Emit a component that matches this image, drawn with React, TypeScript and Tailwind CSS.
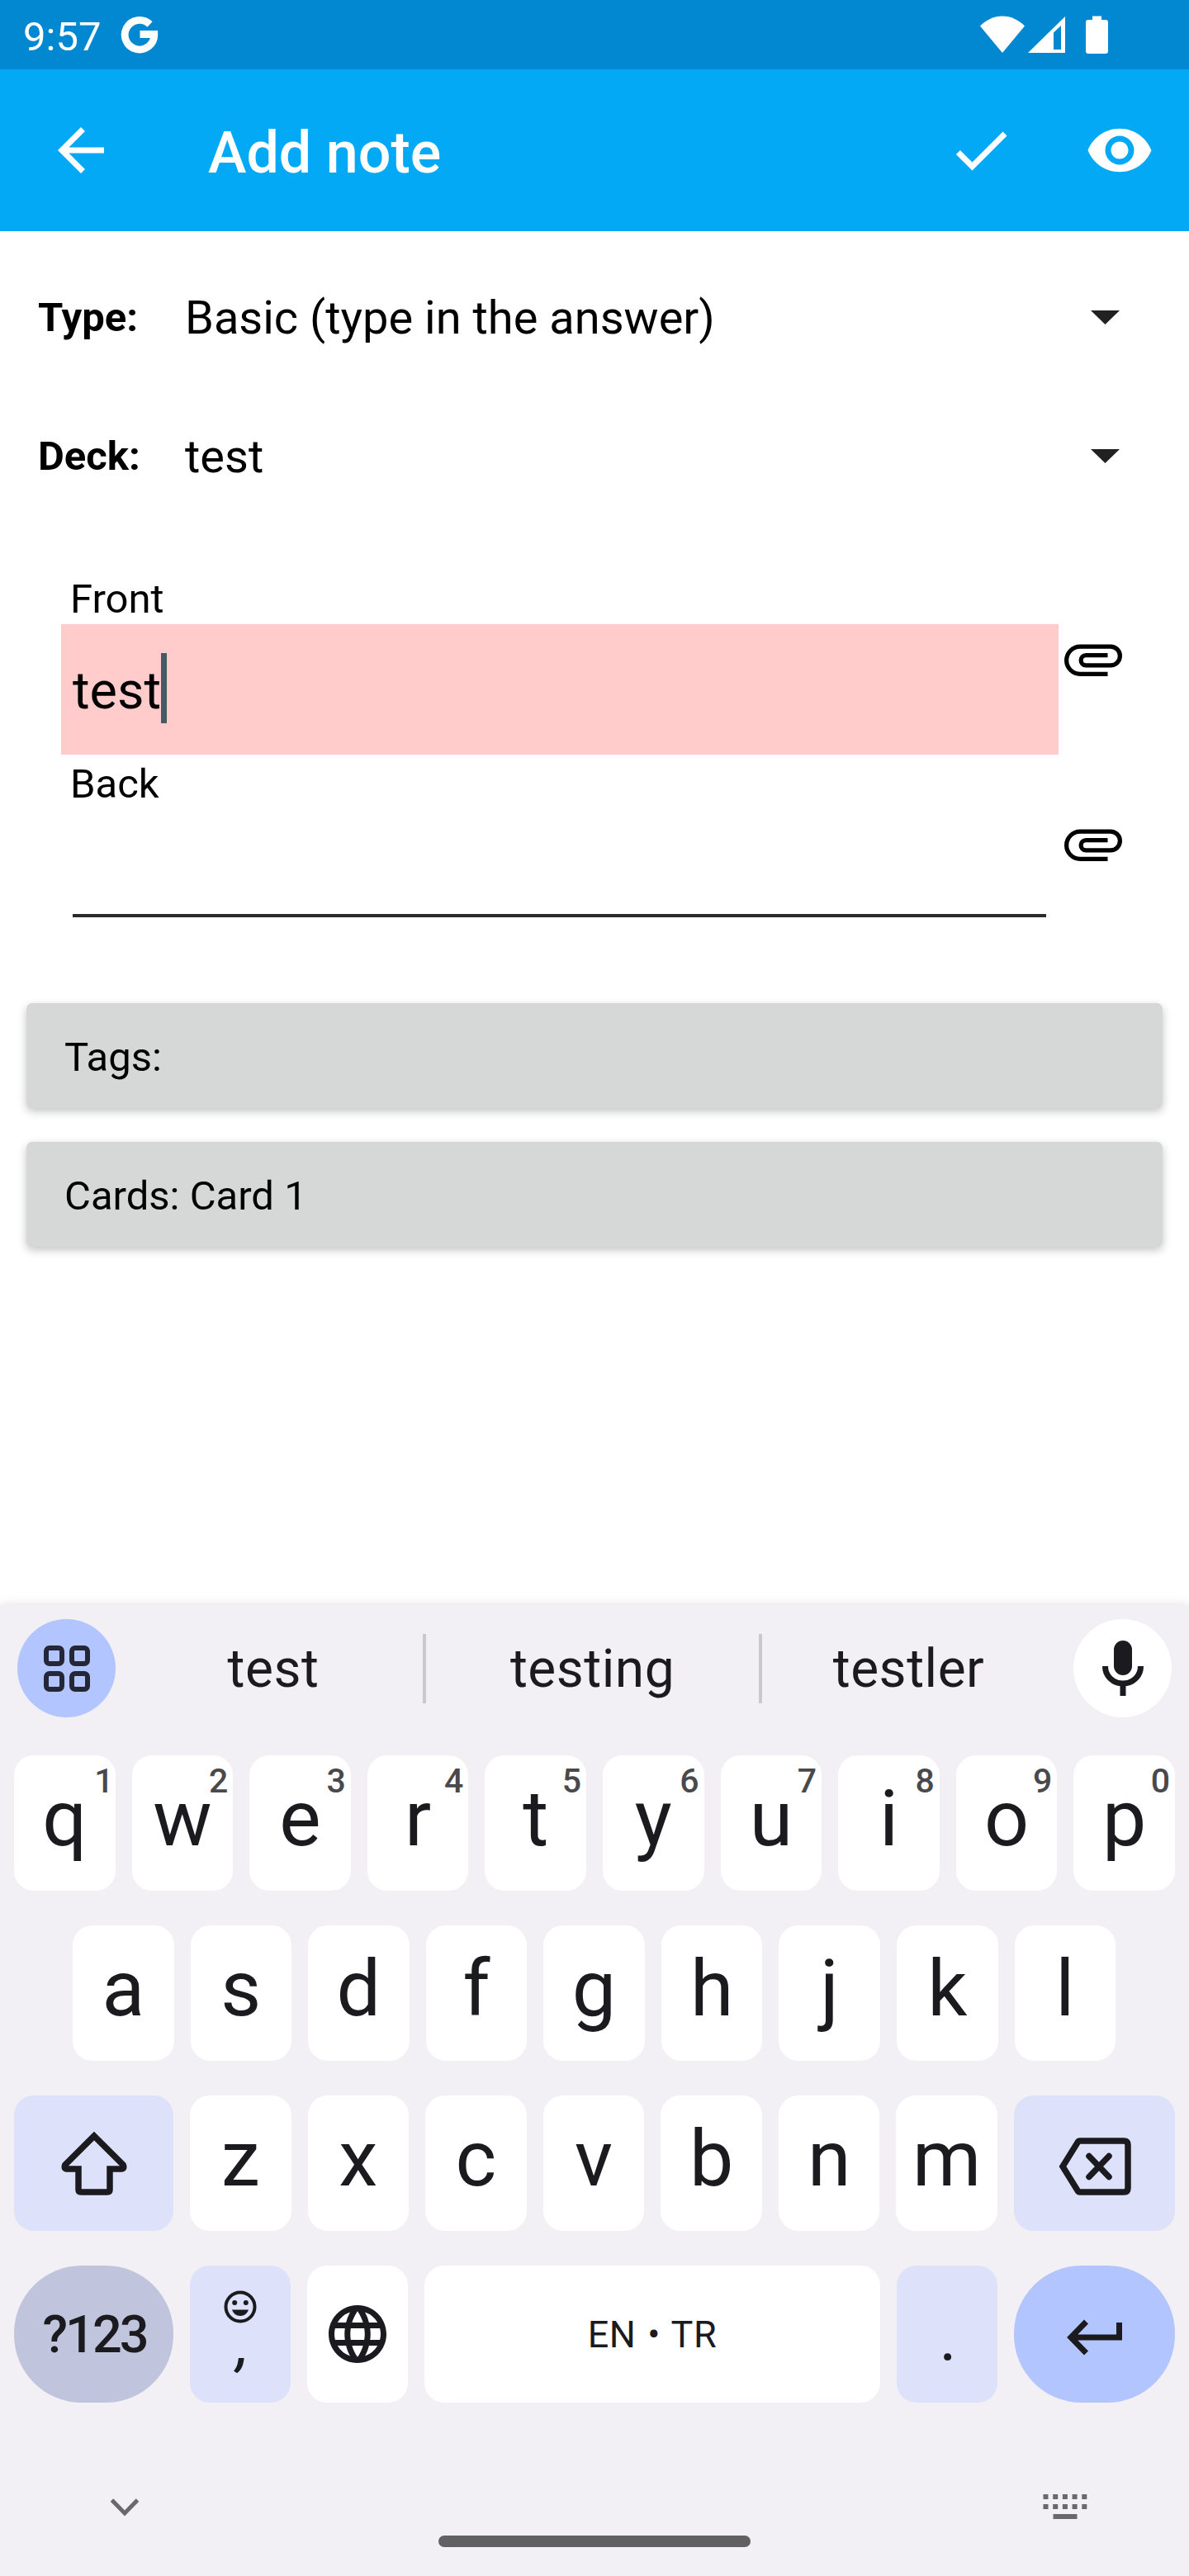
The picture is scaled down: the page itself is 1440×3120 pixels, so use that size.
import React from "react";
import { MdArrowBack, MdCheck, MdLanguage, MdVisibility } from "react-icons/md";

const topKeys = ["q", "w", "e", "r", "t", "y", "u", "i", "o", "p"];
const hints = ["1", "2", "3", "4", "5", "6", "7", "8", "9", "0"];
const homeKeys = ["a", "s", "d", "f", "g", "h", "j", "k", "l"];
const bottomKeys = ["z", "x", "c", "v", "b", "n", "m"];

function StatusBar() {
  return (
    <div className="flex h-[84px] items-center bg-[#0288d1] pl-[28px] text-white">
      <span className="pt-1 text-[49px] leading-none">9:57</span>
      <svg className="ml-[24px] h-[46px] w-[46px]" viewBox="0 0 46 46" fill="none" stroke="white" strokeWidth="8.800">
        <path d="M35.500 10.500A17.800 17.800 0 1 0 40.800 22.500H23.500" />
      </svg>
      <div className="ml-auto mr-[98px] flex items-center">
        <svg className="h-[46px] w-[54px]" viewBox="0 0 54 46" fill="white">
          <path d="M27 45 0 12.500C7.500 5 17 0.500 27 0.500S46.500 5 54 12.500Z" />
        </svg>
        <svg className="ml-[4px] h-[46px] w-[45px]" viewBox="0 0 45 46" fill="white" fillRule="evenodd">
          <path d="M0 45 45 1V45ZM31 20.500V41H40V12Z" />
        </svg>
        <svg className="ml-[25px] h-[46px] w-[27px]" viewBox="0 0 27 46" fill="white">
          <path d="M8 0.500H19V5H24Q27 5 27 8V43Q27 46 24 46H3Q0 46 0 43V8Q0 5 3 5H8Z" />
        </svg>
      </div>
    </div>
  );
}

function AppBar() {
  return (
    <div className="flex h-[196px] items-center bg-[#03a9f4] px-[42px] text-white">
      <MdArrowBack className="ml-[14px] size-[84px]" />
      <h1 className="ml-[112px] pt-[6px] text-[70px] font-medium leading-none">Add note</h1>
      <MdCheck className="ml-auto size-[84px]" />
      <MdVisibility className="ml-[84px] size-[84px]" />
    </div>
  );
}

function SelectRow({ label, value }: { label: string; value: string }) {
  return (
    <div className="flex h-[168px] items-center pl-[46px] pr-[84px]">
      <span className="w-[178px] text-[49px] font-bold leading-none">{label}</span>
      <span className="pt-[2px] text-[56px] leading-none">{value}</span>
      <svg className="ml-auto h-[17px] w-[35px]" viewBox="0 0 35 17" fill="#212121">
        <path d="M0 0H35L17.500 17Z" />
      </svg>
    </div>
  );
}

function Attachment() {
  return (
    <svg className="size-[84px] shrink-0" viewBox="0 0 24 24" fill="none" stroke="black" strokeWidth="1.5">
      <path d="M17 17.250H7.500C4.870 17.250 2.750 15.130 2.750 12.500S4.870 7.750 7.500 7.750H18C19.800 7.750 21.250 9.200 21.250 11S19.800 14.250 18 14.250H9.500C8.530 14.250 7.750 13.470 7.750 12.500S8.530 10.750 9.500 10.750H17" />
    </svg>
  );
}

function Field({ label, value, focused }: { label: string; value?: string; focused?: boolean }) {
  return (
    <div className="pl-[74px]">
      <div className="flex h-[61px] items-center pl-[11px] text-[49px] leading-none">{label}</div>
      <div className="flex h-[158px]">
        {focused ? (
          <div className="flex w-[1208px] items-center bg-[#ffcbcb] pl-[14px]">
            <span className="pt-[3px] text-[63px] leading-none">{value}</span>
            <span className="mb-[3px] h-[85px] w-[7px] bg-[#455a64]" />
          </div>
        ) : (
          <div className="w-[1208px] pl-[14px] pr-[15px]">
            <div className="h-[131px] border-b-4 border-[#2b2b2b]" />
          </div>
        )}
        <Attachment />
      </div>
    </div>
  );
}

function GrayButton({ children }: { children: React.ReactNode }) {
  return (
    <div className="flex h-[127px] items-center rounded-[7px] bg-[#d6d8d7] pl-[46px] pt-[3px] text-[49px] leading-none shadow-[0_4px_11px_rgba(0,0,0,0.24)]">
      {children}
    </div>
  );
}

function LetterKey({ letter, hint }: { letter: string; hint?: string }) {
  return (
    <div className="relative flex h-[164px] min-w-0 flex-1 items-center justify-center rounded-[24px] bg-white pb-[11px] text-[95px] leading-none">
      {letter}
      {hint && (
        <span
          className={`absolute top-[11px] text-[41px] font-medium leading-none text-[#49494c] ${
            hint === "1" ? "right-[2px]" : "right-[6px]"
          }`}
        >
          {hint}
        </span>
      )}
    </div>
  );
}

function Suggestions() {
  return (
    <div className="flex h-[119px] items-center px-[21px] text-[64px] leading-none tracking-[0.5px]">
      <div className="flex size-[119px] items-center justify-center rounded-full bg-[#b3c5ff]">
        <svg className="size-[56px]" viewBox="0 0 56 56" fill="none" stroke="#232736" strokeWidth="6">
          <rect x="3" y="3" width="19" height="19" rx="4" />
          <rect x="34" y="3" width="19" height="19" rx="4" />
          <rect x="3" y="34" width="19" height="19" rx="4" />
          <rect x="34" y="34" width="19" height="19" rx="4" />
        </svg>
      </div>
      <div className="ml-[10px] w-[362px] pt-[2px] text-center">test</div>
      <div className="h-[84px] w-[4px] bg-[#cac8ce]" />
      <div className="w-[403px] pt-[2px] text-center">testing</div>
      <div className="h-[84px] w-[4px] bg-[#cac8ce]" />
      <div className="w-[355px] pt-[2px] text-center">testler</div>
      <div className="ml-auto flex size-[119px] items-center justify-center rounded-full bg-white">
        <svg className="h-[68px] w-[50px]" viewBox="0 0 50 68" fill="none" stroke="#1b1b1f" strokeWidth="7">
          <rect x="14" y="0" width="22" height="42" rx="11" fill="#1b1b1f" stroke="none" />
          <path d="M3.500 31C3.500 43 13 52 25 52S46.500 43 46.500 31M25 52V67" />
        </svg>
      </div>
    </div>
  );
}

function Keyboard() {
  return (
    <div className="mt-auto flex h-[1176px] flex-col bg-[#f2eff5] pt-[17px] text-[#1b1b1f] shadow-[0_0_12px_rgba(0,0,0,0.13)]">
      <Suggestions />
      <div className="mt-[46px] flex gap-[20px] px-[17px]">
        {topKeys.map((k, i) => (
          <LetterKey key={k} letter={k} hint={hints[i]} />
        ))}
      </div>
      <div className="mt-[42px] flex gap-[20px] pl-[88px] pr-[89px]">
        {homeKeys.map((k) => (
          <LetterKey key={k} letter={k} />
        ))}
      </div>
      <div className="mt-[42px] flex gap-[20px] px-[17px]">
        <div className="flex h-[164px] w-[193px] items-center justify-center rounded-[24px] bg-[#dde1f9]">
          <svg className="h-[78px] w-[80px]" viewBox="0 0 80 78" fill="none" stroke="#1b1b1f" strokeWidth="7.500">
            <path d="M40 6 4.800 41Q3 46 7 46H21V71Q21 74 24 74H56Q59 74 59 71V46H73Q77 46 75.200 41Z" />
          </svg>
        </div>
        {bottomKeys.map((k) => (
          <LetterKey key={k} letter={k} />
        ))}
        <div className="flex h-[164px] w-[195px] items-center justify-center rounded-[24px] bg-[#dde1f9] pt-[7px]">
          <svg className="h-[70px] w-[90px]" viewBox="0 0 90 70" fill="none" stroke="#1b1b1f" strokeWidth="7.500">
            <path d="M27 4H80Q85 4 85 9V61Q85 66 80 66H27Q25 66 24 64L6 35 24 6Q25 4 27 4Z" />
            <path d="M38 22.500 62 47.500M62 22.500 38 47.500" strokeLinecap="round" />
          </svg>
        </div>
      </div>
      <div className="mt-[42px] flex h-[166px] gap-[20px] px-[17px]">
        <div className="flex w-[193px] items-center justify-center rounded-[82px] bg-[#c0c5dd] pl-[2px] text-[63px] font-medium leading-none tracking-[-3px]">
          ?123
        </div>
        <div className="flex w-[122px] flex-col items-center rounded-[24px] bg-[#dde1f9] pt-[30px]">
          <svg className="size-[40px]" viewBox="0 0 40 40" fill="#1b1b1f">
            <circle cx="20" cy="20" r="17.500" fill="none" stroke="#1b1b1f" strokeWidth="4" />
            <circle cx="13.200" cy="15" r="3" />
            <circle cx="26.800" cy="15" r="3" />
            <path d="M10 23.500H30C28.500 28 25 31 20 31S11.500 28 10 23.500Z" />
          </svg>
          <span className="-mt-[5px] pl-[6px] text-[66px] font-medium italic leading-none">,</span>
        </div>
        <div className="flex w-[122px] items-center justify-center rounded-[24px] bg-white">
          <MdLanguage className="size-[84px]" />
        </div>
        <div className="flex flex-1 items-center justify-center rounded-[24px] bg-white text-[45px] leading-none tracking-[0.5px] [word-spacing:2px]">
          EN • TR
        </div>
        <div className="flex w-[122px] justify-center rounded-[24px] bg-[#dde1f9] pl-[2px] pt-[48px] text-[80px] leading-none">.</div>
        <div className="flex w-[195px] items-center justify-center rounded-[82px] bg-[#b3c5ff] pt-[7px]">
          <svg className="h-[44px] w-[68px]" viewBox="0 0 68 44" fill="none" stroke="#1b1b1f" strokeWidth="7">
            <path d="M63.500 4V22H6M23.500 3 5 22 23.500 41" />
          </svg>
        </div>
      </div>
      <div className="mt-[111px] flex items-start justify-between pl-[133px] pr-[123px]">
        <svg className="mt-[5px] h-[22px] w-[36px]" viewBox="0 0 36 22" fill="none" stroke="#69696b" strokeWidth="5">
          <path d="M2.500 2 18 18 33.500 2" />
        </svg>
        <svg className="h-[30px] w-[54px]" viewBox="0 0 54 30" fill="#69696b">
          {[0, 1, 2, 3, 4].map((n) => (
            <g key={n}>
              <rect x={0.5 + n * 11.7} y="0" width="6" height="6" />
              <rect x={0.5 + n * 11.7} y="12" width="6" height="6" />
            </g>
          ))}
          <rect x="12.500" y="24" width="29" height="6" />
        </svg>
      </div>
      <div className="mt-[20px] h-[14px] w-[378px] self-center rounded-full bg-[#616163]" />
    </div>
  );
}

export default function App() {
  return (
    <div className="flex h-[3120px] w-[1440px] flex-col overflow-hidden bg-white font-[Roboto,sans-serif] text-black">
      <StatusBar />
      <AppBar />
      <div className="pt-[20px]">
        <SelectRow label="Type:" value="Basic (type in the answer)" />
        <SelectRow label="Deck:" value="test" />
      </div>
      <div className="flex flex-col gap-[5px] pt-[59px]">
        <Field label="Front" value="test" focused />
        <Field label="Back" />
      </div>
      <div className="mt-[77px] flex flex-col gap-[41px] px-[32px]">
        <GrayButton>Tags:</GrayButton>
        <GrayButton>Cards: Card 1</GrayButton>
      </div>
      <Keyboard />
    </div>
  );
}
